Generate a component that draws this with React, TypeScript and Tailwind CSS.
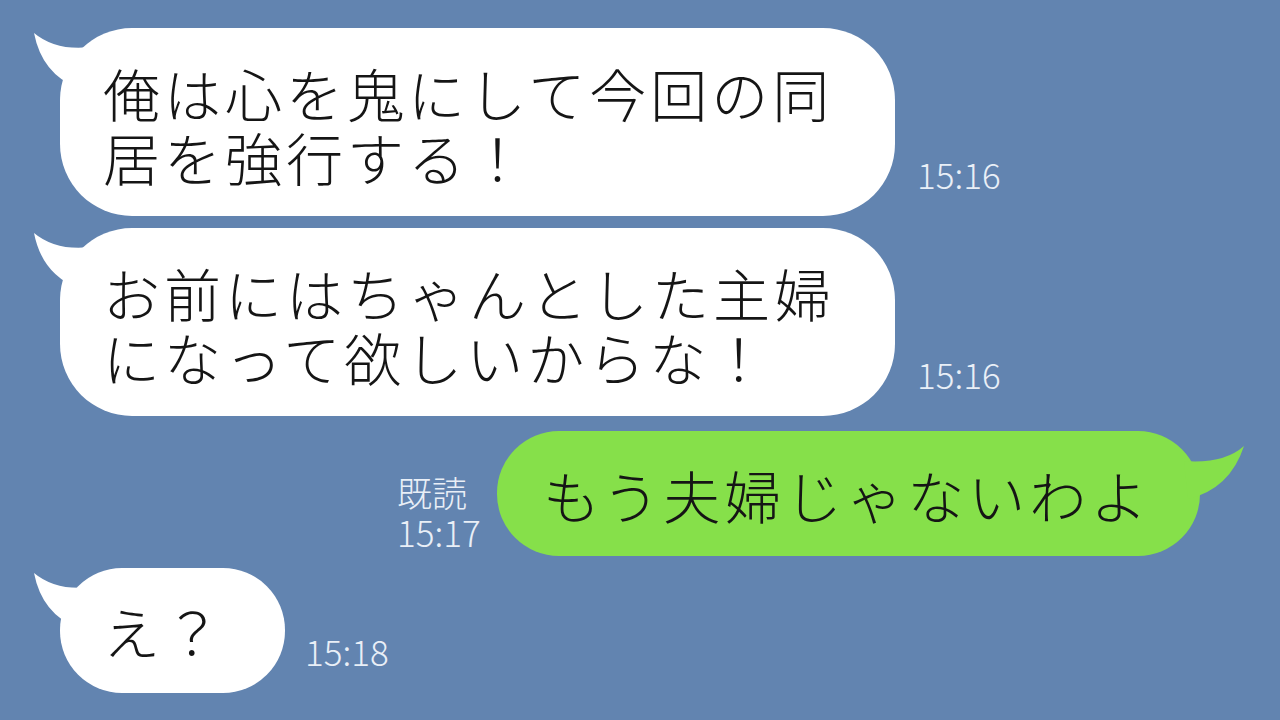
const jp = "font-['Noto_Sans_CJK_JP',sans-serif]";

function TailLeft() {
  return (
    <svg
      className="absolute -left-[30px] top-0"
      width="80"
      height="64"
      viewBox="0 0 80 64"
    >
      <path d="M4 5 Q 28 25 68 18 L 48 60 Q 12 46 4 5 Z" fill="#ffffff" />
    </svg>
  );
}

function TailRight() {
  return (
    <svg
      className="absolute -right-[50px] top-0"
      width="72"
      height="72"
      viewBox="0 0 72 72"
    >
      <path d="M66 15 Q 46 33 6 30 L 10 68 Q 52 58 66 15 Z" fill="#86e04a" />
    </svg>
  );
}

function Time({ children }: { children: React.ReactNode }) {
  return (
    <div className={`${jp} font-light text-[35px] leading-[40px] text-[#e9eff7]`}>
      {children}
    </div>
  );
}

function Incoming({
  lines,
  time,
  width,
  timeGap = "ml-[22px]",
  small = false,
}: {
  lines: string[];
  time: string;
  width: string;
  timeGap?: string;
  small?: boolean;
}) {
  return (
    <div className="flex items-end">
      <div
        className={`relative ${width} bg-white ${
          small ? "rounded-[62px] pt-[30px] pb-[31px]" : "rounded-[72px] pt-[32px] pb-[28px]"
        } pl-[43px]`}
      >
        <TailLeft />
        <p className={`relative ${jp} font-light text-[57px] leading-[64px] tracking-[4px] text-[#151515]`}>
          {lines.map((l, i) => (
            <span key={l}>
              {i > 0 && <br />}
              {l}
            </span>
          ))}
        </p>
      </div>
      <div className={`${timeGap} mb-[22px]`}>
        <Time>{time}</Time>
      </div>
    </div>
  );
}

export default function App() {
  return (
    <div className="w-[1280px] h-[720px] bg-[#6284b0] overflow-hidden pt-[28px] pl-[60px] flex flex-col">
      <Incoming
        lines={["俺は心を鬼にして今回の同", "居を強行する！"]}
        time="15:16"
        width="w-[835px]"
      />
      <div className="mt-[12px]">
        <Incoming
          lines={["お前にはちゃんとした主婦", "になって欲しいからな！"]}
          time="15:16"
          width="w-[835px]"
        />
      </div>

      <div className="mt-[15px] flex items-end ml-[337px]">
        <p className={`${jp} w-[85px] mb-[4px] mr-[15px] text-[35px] leading-[40px] text-[#e9eff7] font-light`}>
          既読
          <br />
          15:17
        </p>
        <div className="relative w-[703px] h-[125px] bg-[#86e04a] rounded-[62px] pl-[46px] flex items-center">
          <TailRight />
          <div className={`relative ${jp} font-light text-[57px] leading-[64px] tracking-[4px] text-[#151515]`}>
            もう夫婦じゃないわよ
          </div>
        </div>
      </div>

      <div className="mt-[12px]">
        <Incoming lines={["え？"]} time="15:18" width="w-[225px]" small timeGap="ml-[20px]" />
      </div>
    </div>
  );
}
